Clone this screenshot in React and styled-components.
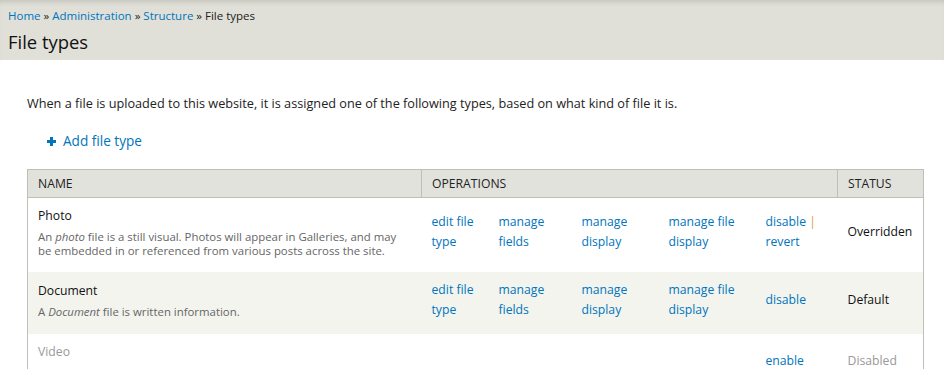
import styled, { createGlobalStyle } from "styled-components"

const colors = {
  link: "#0074bd",
  band: "#e0e0d8",
  head: "#e1e2dc",
  border: "#bebfb9",
  even: "#f3f4ee",
  text: "#333",
  muted: "#666",
  disabled: "#999"
}

const GlobalStyle = createGlobalStyle`
  body {
    margin: 0;
    background: #fff;
    color: ${colors.text};
    font-family: "Open Sans", "DejaVu Sans", sans-serif;
    font-size: 12.2px;
    line-height: 20px;
  }
  a {
    color: ${colors.link};
    text-decoration: none;
  }
`

const Branding = styled.header`
  background: ${colors.band};
  box-shadow: inset 0 5px 5px -3px rgba(0, 0, 0, 0.13);
  padding: 6px 8px 4px;
  height: 50px;
`

const Breadcrumb = styled.nav`
  font-size: 11.5px;
  line-height: 20px;
  color: #222;
`

const PageTitle = styled.h1`
  margin: 2px 0 0;
  font-size: 18.4px;
  line-height: 28px;
  font-weight: normal;
  color: #111;
`

const Page = styled.main`
  padding: 33px 20px 0 27px;
`

const Intro = styled.p`
  margin: 0;
  font-size: 12.7px;
  color: #222;
`

const ActionLinks = styled.div`
  margin: 18px 0 0 20px;
  display: flex;
  align-items: center;
  gap: 7px;
  font-size: 13.6px;
`

const Plus = () => (
  <svg width="9" height="9" viewBox="0 0 9 9" aria-hidden="true">
    <path d="M3 0h3v3h3v3H6v3H3V6H0V3h3z" fill={colors.link} />
  </svg>
)

const Table = styled.table`
  margin-top: 18px;
  width: 896px;
  table-layout: fixed;
  border-collapse: collapse;
  border-left: 1px solid ${colors.border};
  border-right: 1px solid ${colors.border};
`

const Th = styled.th`
  background: ${colors.head};
  border: 1px solid ${colors.border};
  padding: 4px 10px 3px;
  text-align: left;
  font-weight: normal;
  text-transform: uppercase;
  color: #222;
  font-size: 12.2px;
  height: 20px;
`

const Row = styled.tr`
  background: ${(p) => (p.$even ? colors.even : "#fff")};
`

const Td = styled.td`
  padding: 8px 10px 14px;
  vertical-align: middle;
`

const Name = styled.div`
  color: ${(p) => (p.$off ? colors.disabled : "#111")};
`

const Description = styled.div`
  margin-top: 4px;
  font-size: 11.4px;
  line-height: 14px;
  color: ${(p) => (p.$off ? colors.disabled : colors.muted)};
`

const OpLinks = styled.ul`
  margin: 0;
  padding: 0;
  list-style: none;

  li {
    display: inline;
  }

  li:not(:last-child)::after {
    content: " | ";
    color: #e39a3e;
  }
`

const Status = styled(Td)`
  color: ${(p) => (p.$off ? colors.disabled : "#111")};
`

const widths = [394, 67, 83, 87, 97, 82, 86]
const ops = ["edit file type", "manage fields", "manage display", "manage file display"]

const types = [
  {
    name: "Photo",
    desc: (
      <>
        An <em>photo</em> file is a still visual. Photos will appear in Galleries, and may
        be embedded in or referenced from various posts across the site.
      </>
    ),
    toggle: ["disable", "revert"],
    status: "Overridden"
  },
  {
    name: "Document",
    desc: (
      <>
        A <em>Document</em> file is written information.
      </>
    ),
    toggle: ["disable"],
    status: "Default"
  },
  {
    name: "Video",
    desc: (
      <>
        A <em>Video</em> file is a moving visual recording.
      </>
    ),
    toggle: ["enable"],
    status: "Disabled",
    off: true
  }
]

export default function App() {
  return (
    <>
      <GlobalStyle />
      <Branding>
        <Breadcrumb>
          <a href="#">Home</a> » <a href="#">Administration</a> » <a href="#">Structure</a> »
          File types
        </Breadcrumb>
        <PageTitle>File types</PageTitle>
      </Branding>
      <Page>
        <Intro>
          When a file is uploaded to this website, it is assigned one of the following types,
          based on what kind of file it is.
        </Intro>
        <ActionLinks>
          <Plus />
          <a href="#">Add file type</a>
        </ActionLinks>
        <Table>
          <colgroup>
            {widths.map((w, i) => (
              <col key={i} style={{ width: w }} />
            ))}
          </colgroup>
          <thead>
            <tr>
              <Th>Name</Th>
              <Th colSpan={5}>Operations</Th>
              <Th>Status</Th>
            </tr>
          </thead>
          <tbody>
            {types.map((t, i) => (
              <Row key={t.name} $even={i % 2 === 1}>
                <Td>
                  <Name $off={t.off}>{t.name}</Name>
                  <Description $off={t.off}>{t.desc}</Description>
                </Td>
                {t.off ? (
                  <td colSpan={4} />
                ) : (
                  ops.map((op) => (
                    <Td key={op}>
                      <a href="#">{op}</a>
                    </Td>
                  ))
                )}
                <Td>
                  <OpLinks>
                    {t.toggle.map((l) => (
                      <li key={l}>
                        <a href="#">{l}</a>
                      </li>
                    ))}
                  </OpLinks>
                </Td>
                <Status $off={t.off}>{t.status}</Status>
              </Row>
            ))}
          </tbody>
        </Table>
      </Page>
    </>
  )
}
